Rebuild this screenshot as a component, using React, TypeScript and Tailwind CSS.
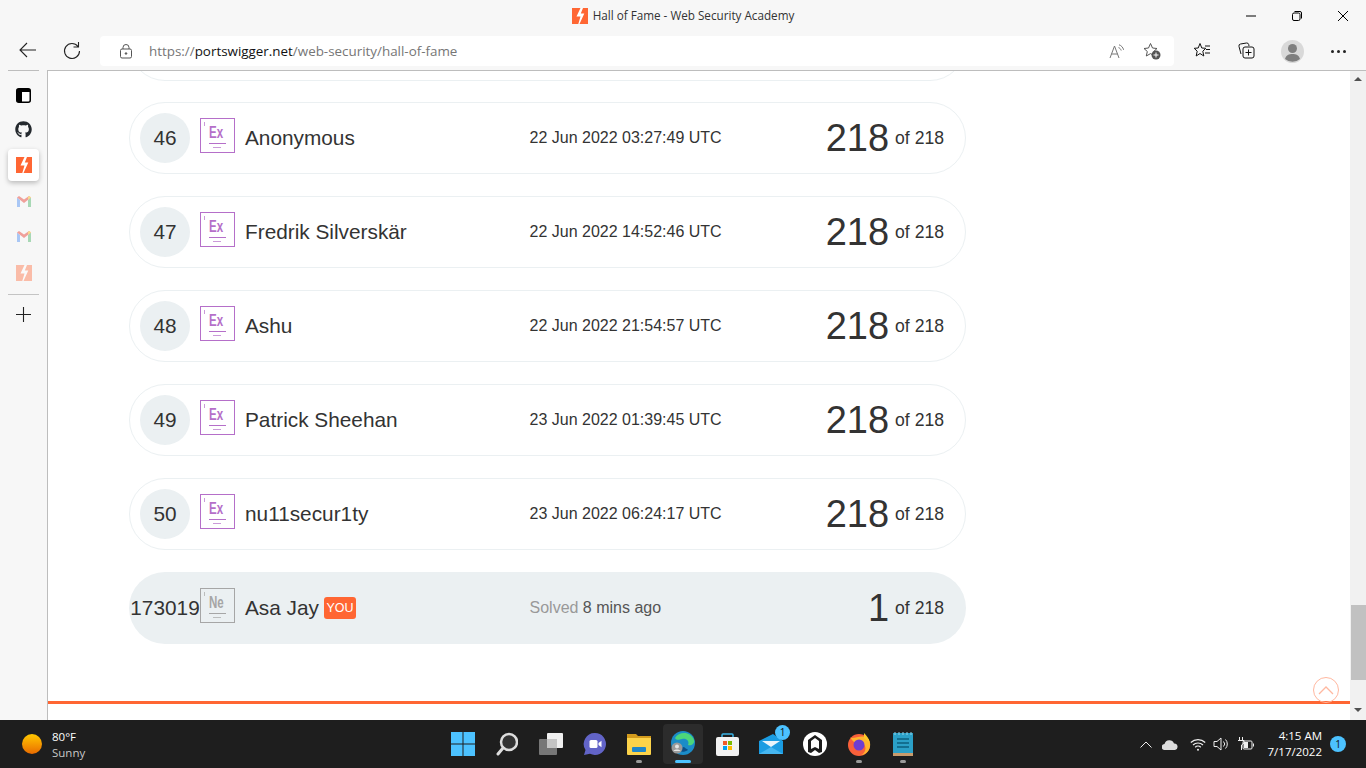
import { FaGithub } from 'react-icons/fa';

type Entry = { rank: string; name: string; date: string };

const entries: Entry[] = [
    { rank: '46', name: 'Anonymous', date: '22 Jun 2022 03:27:49 UTC' },
    { rank: '47', name: 'Fredrik Silverskär', date: '22 Jun 2022 14:52:46 UTC' },
    { rank: '48', name: 'Ashu', date: '22 Jun 2022 21:54:57 UTC' },
    { rank: '49', name: 'Patrick Sheehan', date: '23 Jun 2022 01:39:45 UTC' },
    { rank: '50', name: 'nu11secur1ty', date: '23 Jun 2022 06:24:17 UTC' },
];

function PsLogo({ className }: { className?: string }) {
    return (
        <svg className={className} viewBox="0 0 16 16">
            <rect width="16" height="16" fill="#ff6633" />
            <path d="M8.500 0h2.500L8.800 5.500h3.500L7.500 16H6.300l2.200-7.500h-4z" fill="#fff" />
        </svg>
    );
}

function GmailLogo() {
    return (
        <svg className="w-[14px] h-[11px]" viewBox="0 0 14 11">
            <path d="M0 1.500V11h3V4z" fill="#a9c7f5" />
            <path d="M14 1.500V11h-3V4z" fill="#a8d8b5" />
            <path d="M0 1.500 7 7l7-5.500L12 0 7 3.600 2 0z" fill="#f0a09a" />
            <path d="M11 3.500 14 1.500 12.500 0 11 1z" fill="#f8dd88" />
        </svg>
    );
}

function Element({ symbol, color }: { symbol: string; color: string }) {
    return (
        <div className="relative w-[35px] h-[35px] mb-[6px] shrink-0 border-[1.5px]" style={{ borderColor: color, color }}>
            <div className="absolute left-[3px] top-[3px] w-px h-[4px] opacity-70" style={{ backgroundColor: color }}></div>
            <span className="absolute left-[8px] top-[5px] text-[16px] leading-[18px] font-bold scale-x-[0.72] origin-left">{symbol}</span>
            <div className="absolute left-[8px] top-[24px] w-[17px] h-px" style={{ backgroundColor: color }}></div>
            <div className="absolute left-[12px] top-[28px] w-[8px] h-px opacity-70" style={{ backgroundColor: color }}></div>
        </div>
    );
}

function Score({ value }: { value: string }) {
    return (
        <div className="ml-auto flex items-center gap-[6px] text-[#333]">
            <span className="text-[38px] leading-[44px]">{value}</span>
            <span className="text-[17.6px]">of 218</span>
        </div>
    );
}

function Row({ entry }: { entry: Entry }) {
    return (
        <div className="h-[72px] flex items-center rounded-[36px] border border-[#ebf0f2] pl-[10px] pr-[21px]">
            <div className="w-[50px] h-[50px] rounded-full bg-[#ebf0f2] flex items-center justify-center text-[20.8px] text-[#333]">{entry.rank}</div>
            <div className="ml-[10px]"><Element symbol="Ex" color="#b56fc9" /></div>
            <div className="ml-[10px] w-[284.5px] text-[20.8px] text-[#333]">{entry.name}</div>
            <div className="text-[16px] text-[#333]">{entry.date}</div>
            <Score value="218" />
        </div>
    );
}

function YouRow() {
    return (
        <div className="h-[72px] flex items-center rounded-[36px] bg-[#ebf0f2] pl-[11px] pr-[22px]">
            <div className="w-[50px] flex justify-center text-[20.8px] text-[#333] whitespace-nowrap">173019</div>
            <div className="ml-[10px]"><Element symbol="Ne" color="#a6a6a6" /></div>
            <div className="ml-[10px] w-[284.5px] flex items-center gap-[5px]">
                <span className="text-[20.8px] text-[#333]">Asa Jay</span>
                <span className="h-[22px] px-[2.5px] rounded-[3px] bg-[#ff6633] text-white text-[12.5px] leading-[23px]">YOU</span>
            </div>
            <div className="text-[16px] text-[#555]"><span className="text-[#999]">Solved</span> 8 mins ago</div>
            <Score value="1" />
        </div>
    );
}

function TitleBar() {
    return (
        <div className="relative h-[36px] pb-[4px] flex items-center justify-center gap-[5px] text-[11.7px] text-[#333]">
            <PsLogo className="w-[16px] h-[16px]" />
            <span>Hall of Fame - Web Security Academy</span>
            <div className="absolute right-0 top-0 h-[32px] flex items-center text-black">
                <div className="w-[46px] flex justify-center">
                    <svg className="w-[12px] h-[12px]" viewBox="0 0 12 12"><path d="M1 6h10" stroke="currentColor" /></svg>
                </div>
                <div className="w-[46px] flex justify-center">
                    <svg className="w-[12px] h-[12px]" viewBox="0 0 12 12" fill="none" stroke="currentColor"><rect x="1.500" y="3" width="7.500" height="7.500" rx="1.500" /><path d="M3.500 1.500H9A1.500 1.500 0 0 1 10.500 3v5.500" /></svg>
                </div>
                <div className="w-[46px] flex justify-center">
                    <svg className="w-[12px] h-[12px]" viewBox="0 0 12 12"><path d="M1 1l10 10M11 1 1 11" stroke="currentColor" /></svg>
                </div>
            </div>
        </div>
    );
}

function Toolbar() {
    return (
        <div className="h-[34px] flex items-start">
            <div className="w-[56px] flex justify-center pt-[4px]">
                <svg className="w-[20px] h-[20px]" viewBox="0 0 20 20" fill="none" stroke="#222" strokeWidth="1.100"><path d="M18 10H2M9 3l-7 7 7 7" /></svg>
            </div>
            <div className="w-[32px] flex justify-center pt-[4px]">
                <svg className="w-[20px] h-[20px]" viewBox="0 0 20 20" fill="none" stroke="#222" strokeWidth="1.100"><path d="M16 6.500A7.500 7.500 0 1 0 17.500 11M16.500 2v5h-5" /></svg>
            </div>
            <div className="ml-[12px] w-[1074px] h-[30px] bg-white rounded-[4px] flex items-center">
                <svg className="ml-[20px] w-[12px] h-[15px]" viewBox="0 0 12 15" fill="none" stroke="#555"><rect x="0.500" y="5" width="11" height="9" rx="1.500" /><path d="M3 5V3.500a3 3 0 0 1 6 0V5" /><circle cx="6" cy="9.500" r="0.800" fill="#555" /></svg>
                <div className="ml-[17px] text-[13.4px] text-[#767676]">https://<span className="text-[#111]">portswigger.net</span>/web-security/hall-of-fame</div>
                <div className="ml-auto flex items-center">
                    <svg className="w-[16px] h-[15px]" viewBox="0 0 16 15" fill="none" stroke="#777"><path d="M1 14 5.500 2 10 14M2.500 10h6M10 .8c2.200.6 4 2.600 4.600 5M9.500 3.600c1.200.3 2.300 1.500 2.700 2.900" /></svg>
                    <svg className="ml-[18px] mr-[13px] w-[18px] h-[18px]" viewBox="0 0 18 18"><path d="M7.500 1.500 9.500 6l4.500.500-3.300 3 1 4.500-4.200-2.400L3.300 14l1-4.500L1 6.500 5.500 6z" fill="none" stroke="#555" /><circle cx="13" cy="13" r="4.500" fill="#555" /><path d="M13 10.500v5M10.500 13h5" stroke="#fff" /></svg>
                </div>
            </div>
            <div className="w-[56px] flex justify-center pt-[6px]">
                <svg className="w-[18px] h-[17px]" viewBox="0 0 18 17" fill="none" stroke="#111"><path d="M7 1.500 8.800 6l4 .300-3 2.900 1 4.800L7 11.500 3.200 14l1-4.800-3-2.900 4-.300zM12 4h5M13 7.500h4M12 11h5" /></svg>
            </div>
            <div className="w-[32px] flex justify-center pt-[6px]">
                <svg className="w-[17px] h-[17px]" viewBox="0 0 17 17" fill="none" stroke="#111"><path d="M3 12 1 4.500A2 2 0 0 1 2.500 2l6-1a2 2 0 0 1 2.200 1.500L11 4" /><rect x="5" y="5" width="11" height="11" rx="2" /><path d="M10.500 7.500v6M7.500 10.500h6" /></svg>
            </div>
            <div className="w-[60px] flex justify-center pt-[4px]">
                <svg className="w-[23px] h-[23px]" viewBox="0 0 23 23"><circle cx="11.500" cy="11.500" r="11.500" fill="#d9d9d9" /><circle cx="11.500" cy="8.500" r="4.500" fill="#7f7f7f" /><path d="M4 19c1-4 4-5 7.500-5s6.500 1 7.500 5a11.500 11.500 0 0 1-15 0z" fill="#7f7f7f" /></svg>
            </div>
            <div className="w-[32px] flex justify-center gap-[3px] pt-[14px]">
                <div className="w-[3px] h-[3px] rounded-full bg-[#222]"></div>
                <div className="w-[3px] h-[3px] rounded-full bg-[#222]"></div>
                <div className="w-[3px] h-[3px] rounded-full bg-[#222]"></div>
            </div>
        </div>
    );
}

function SideBar() {
    return (
        <div className="w-[48px] shrink-0 border-r border-[#bdbdbd] flex flex-col items-center">
            <div className="w-[31px] border-t border-[#bdbdbd]"></div>
            <div className="h-[36px] w-full mt-[6px] flex items-center justify-center">
                <svg className="w-[15px] h-[15px]" viewBox="0 0 15 15"><rect x="0.750" y="0.750" width="13.500" height="13.500" rx="2" fill="#fff" stroke="#000" strokeWidth="1.500" /><path d="M1 1h13v3H6v10H2a1 1 0 0 1-1-1z" fill="#000" /></svg>
            </div>
            <div className="h-[32px] w-full flex items-center justify-center"><FaGithub className="w-[17px] h-[17px] text-[#24292e]" /></div>
            <div className="h-[32px] w-[31px] mt-[4px] bg-white rounded-[4px] shadow-[0_2px_5px_rgba(0,0,0,0.25)] flex items-center justify-center">
                <PsLogo className="w-[16px] h-[16px]" />
            </div>
            <div className="h-[36px] w-full mt-[2px] flex items-center justify-center"><GmailLogo /></div>
            <div className="h-[34px] w-full flex items-center justify-center"><GmailLogo /></div>
            <div className="h-[36px] w-full mt-[2px] flex items-center justify-center opacity-40"><PsLogo className="w-[16px] h-[16px]" /></div>
            <div className="mt-[3px] w-[31px] border-t border-[#c4c4c4]"></div>
            <div className="h-[38px] w-full flex items-center justify-center">
                <svg className="w-[15px] h-[15px]" viewBox="0 0 15 15"><path d="M7.500 0v15M0 7.500h15" stroke="#222" strokeWidth="1.100" /></svg>
            </div>
        </div>
    );
}

function ScrollBar() {
    return (
        <div className="w-[16px] shrink-0 bg-[#f1f1f1] border-t border-[#bdbdbd] flex flex-col items-center">
            <div className="mt-[6px] w-0 h-0 border-x-[4px] border-x-transparent border-b-[4px] border-b-[#505050]"></div>
            <div className="mt-[524px] w-[15px] h-[75px] bg-[#c1c1c1]"></div>
            <div className="mt-[28px] w-0 h-0 border-x-[4px] border-x-transparent border-t-[4px] border-t-[#505050]"></div>
        </div>
    );
}

function Page() {
    return (
        <div className="relative flex-1 bg-white border-t border-[#bdbdbd] overflow-hidden">
            <div className="ml-[81px] w-[837px] flex flex-col">
                <div className="h-[10px] mb-[21px] flex flex-col justify-end overflow-hidden">
                    <div className="h-[72px] shrink-0 rounded-[36px] border border-[#ebf0f2]"></div>
                </div>
                <div className="flex flex-col gap-[22px]">
                    {entries.map((e) => (
                        <Row key={e.rank} entry={e} />
                    ))}
                    <YouRow />
                </div>
            </div>
            <div className="mt-[57px] h-[3px] bg-[#ff6633]"></div>
            <div className="absolute right-[11px] top-[606px] w-[26px] h-[26px] rounded-full border-[1.5px] border-[#ffb8a0] flex items-center justify-center">
                <svg className="w-[16px] h-[9px]" viewBox="0 0 16 9" fill="none" stroke="#ffb8a0" strokeWidth="1.300"><path d="M1 8l7-7 7 7" /></svg>
            </div>
        </div>
    );
}

const taskIcons = [
    <svg key="win" className="w-[24px] h-[24px]" viewBox="0 0 24 24"><path d="M0 0h11.500v11.500H0zM12.500 0H24v11.500H12.500zM0 12.500h11.500V24H0zM12.500 12.500H24V24H12.500z" fill="#4cc2ff" /></svg>,
    <svg key="search" className="w-[22px] h-[24px]" viewBox="0 0 22 24" fill="none"><circle cx="13" cy="10" r="8" stroke="#ddd" strokeWidth="2.500" fill="#333" /><path d="M7 16l-5 6" stroke="#ddd" strokeWidth="3" strokeLinecap="round" /></svg>,
    <svg key="tasks" className="w-[24px] h-[22px]" viewBox="0 0 24 22"><rect x="8" width="16" height="15" rx="1" fill="#f0f0f0" /><rect y="6" width="18" height="16" rx="1" fill="#777" /><rect x="8" y="6" width="10" height="9" fill="#c4c4c4" /></svg>,
    <svg key="chat" className="w-[24px] h-[24px]" viewBox="0 0 24 24"><path d="M12 1a11 11 0 1 1-5 20.800L1 23l1.500-5A11 11 0 0 1 12 1z" fill="#6264c7" /><rect x="6.500" y="8" width="8" height="8" rx="1.500" fill="#fff" /><path d="M15.500 11l3-2.200v6.400l-3-2.200z" fill="#fff" /></svg>,
    <svg key="folder" className="w-[24px] h-[22px]" viewBox="0 0 24 22"><path d="M0 1h9l2 2h13v5H0z" fill="#d39b1d" /><path d="M0 5h24v16a1 1 0 0 1-1 1H1a1 1 0 0 1-1-1z" fill="#fcd34a" /><rect x="5" y="14" width="14" height="5" rx="1" fill="#1f86c9" /></svg>,
    <svg key="edge" className="w-[24px] h-[26px]" viewBox="0 0 24 26"><circle cx="12" cy="12" r="12" fill="#1b8cc7" /><path d="M4 7C8 0 20 0 23 9c1 4-3 6-6 5 2-4-2-7-6-6-3 .600-5 2-7-1z" fill="#4cd67a" /><path d="M17 19c-4 3-9 2-12-1l8-2c2 2 4 2 4 3z" fill="#0c4f87" /><circle cx="6" cy="17" r="5.500" fill="#9a9a9a" /><circle cx="6" cy="15.500" r="2" fill="#e5e5e5" /><path d="M2.500 20c.5-2 6.500-2 7 0z" fill="#e5e5e5" /></svg>,
    <svg key="store" className="w-[23px] h-[23px]" viewBox="0 0 23 23"><path d="M6 5V2a1 1 0 0 1 1-1h9a1 1 0 0 1 1 1v3" fill="none" stroke="#3ab4e6" strokeWidth="1.500" /><rect y="4" width="23" height="19" rx="2" fill="#f2f2f2" /><rect x="7" y="8" width="4" height="4" fill="#f05a28" /><rect x="12" y="8" width="4" height="4" fill="#7cbb00" /><rect x="7" y="13" width="4" height="4" fill="#00a1f1" /><rect x="12" y="13" width="4" height="4" fill="#ffbb00" /></svg>,
    <svg key="mail" className="w-[24px] h-[20px]" viewBox="0 0 24 20"><path d="M0 7 14 0l10 7v13H0z" fill="#1a9ce2" /><path d="M3 7l18 0-9 6z" fill="#e8f4fb" /><path d="M0 20 12 13l12 7z" fill="#46b6f0" /></svg>,
    <svg key="github" className="w-[24px] h-[24px]" viewBox="0 0 24 24"><circle cx="12" cy="12" r="12" fill="#fff" /><path d="M12 3 5 8v12l3 1 4-3 4 3 3-1V8z" fill="#1c1c1c" /><path d="M12 6 8 9v8l4-2 4 2V9z" fill="#fff" /></svg>,
    <svg key="firefox" className="w-[24px] h-[24px]" viewBox="0 0 24 24"><circle cx="12" cy="13" r="11" fill="#f9603a" /><path d="M3 5c3 4 16-7 20 6 1 6-3 12-9 12 5-2 6-9 2-11-5-2-8 2-13-7z" fill="#ffb52e" /><circle cx="12" cy="13" r="5.500" fill="#6e3dd1" /><path d="M17 1c2 2 5 5 6 10l-6-5z" fill="#ffc928" /></svg>,
    <svg key="notepad" className="w-[20px] h-[24px]" viewBox="0 0 20 24"><rect y="1" width="20" height="23" fill="#2ba0c7" /><rect y="21" width="20" height="3" fill="#c89b6c" /><path d="M2 0v3M6 0v3M10 0v3M14 0v3M18 0v3" stroke="#8fd3ea" /><path d="M4 7h12M4 11h12M4 15h12" stroke="#0d5f7f" strokeWidth="1.500" /></svg>,
];

const runningIndicator: Record<number, string> = {
    4: 'w-[6px] bg-[#9a9a9a]',
    5: 'w-[16px] bg-[#4cc2ff]',
    9: 'w-[6px] bg-[#9a9a9a]',
    10: 'w-[6px] bg-[#9a9a9a]',
};

function TaskBar() {
    return (
        <div className="h-[48px] shrink-0 bg-[#1e1e1e] flex items-center text-white font-['Open_Sans',sans-serif]">
            <div className="w-[441px] flex items-center pl-[22px] gap-[10px]">
                <div className="w-[20px] h-[20px] rounded-full bg-gradient-to-b from-[#ffc800] to-[#e86a00]"></div>
                <div className="mt-[2px] text-[11.5px] leading-[16px]">
                    <div>80°F</div>
                    <div className="text-[#c8c8c8]">Sunny</div>
                </div>
            </div>
            <div className="flex items-center">
                {taskIcons.map((icon, i) => (
                    <div key={icon.key} className={i === 5 ? 'relative mx-[2px] w-[40px] h-[40px] flex items-center justify-center rounded-[4px] bg-[#2c2c2c]' : 'relative w-[44px] h-[40px] flex items-center justify-center'}>
                        {icon}
                        {runningIndicator[i] && <div className={`absolute bottom-[1px] h-[3px] rounded-full ${runningIndicator[i]}`}></div>}
                        {i === 7 && <div className="absolute right-[3px] top-[1px] w-[15px] h-[15px] rounded-full bg-[#4cc2ff] text-[#111] text-[10px] leading-[15px] text-center">1</div>}
                    </div>
                ))}
            </div>
            <div className="ml-auto flex items-center">
                <svg className="w-[12px] h-[7px]" viewBox="0 0 12 7" fill="none" stroke="#eee"><path d="M.5 6.500 6 1l5.500 5.500" /></svg>
                <svg className="ml-[10px] w-[16px] h-[11px]" viewBox="0 0 16 11"><path d="M3 11a3 3 0 0 1-.5-6A5 5 0 0 1 12 4.500 3.300 3.300 0 0 1 13 11z" fill="#ddd" /></svg>
                <svg className="ml-[12px] w-[16px] h-[13px]" viewBox="0 0 16 13" fill="none" stroke="#eee" strokeWidth="1.200"><path d="M.8 4.500a10.500 10.500 0 0 1 14.400 0M3 7a7.200 7.200 0 0 1 10 0M5.200 9.300a4 4 0 0 1 5.600 0" /><circle cx="8" cy="11.800" r="1" fill="#eee" stroke="none" /></svg>
                <svg className="ml-[7px] w-[16px] h-[14px]" viewBox="0 0 16 14" fill="none" stroke="#eee"><path d="M1 4.500h3L8 1v12L4 9.500H1zM10.500 4.500a3.500 3.500 0 0 1 0 5M12.500 2.500a6.500 6.500 0 0 1 0 9" /></svg>
                <svg className="ml-[9px] w-[16px] h-[14px]" viewBox="0 0 16 14" fill="none" stroke="#eee"><path d="M1.500 0v3M4.500 0v3M0 3.500h6V6L3.500 8v5" /><rect x="5" y="4" width="9" height="8" rx="1" /><rect x="6" y="5" width="4" height="6" fill="#eee" stroke="none" /><path d="M15.500 6.500v3" /></svg>
                <div className="ml-[10px] w-[58px] text-right text-[11.5px] leading-[16px]">
                    <div>4:15 AM</div>
                    <div>7/17/2022</div>
                </div>
                <div className="ml-[8px] mr-[20px] w-[16px] h-[16px] rounded-full bg-[#4cc2ff] text-[#111] text-[10px] leading-[16px] text-center">1</div>
            </div>
        </div>
    );
}

export default function App() {
    return (
        <div className="w-[1366px] h-[768px] overflow-hidden flex flex-col bg-[#f7f7f7] font-['Open_Sans',sans-serif]">
            <TitleBar />
            <Toolbar />
            <div className="flex-1 flex min-h-0 font-['Liberation_Sans',Arial,sans-serif]">
                <SideBar />
                <Page />
                <ScrollBar />
            </div>
            <TaskBar />
        </div>
    );
}
